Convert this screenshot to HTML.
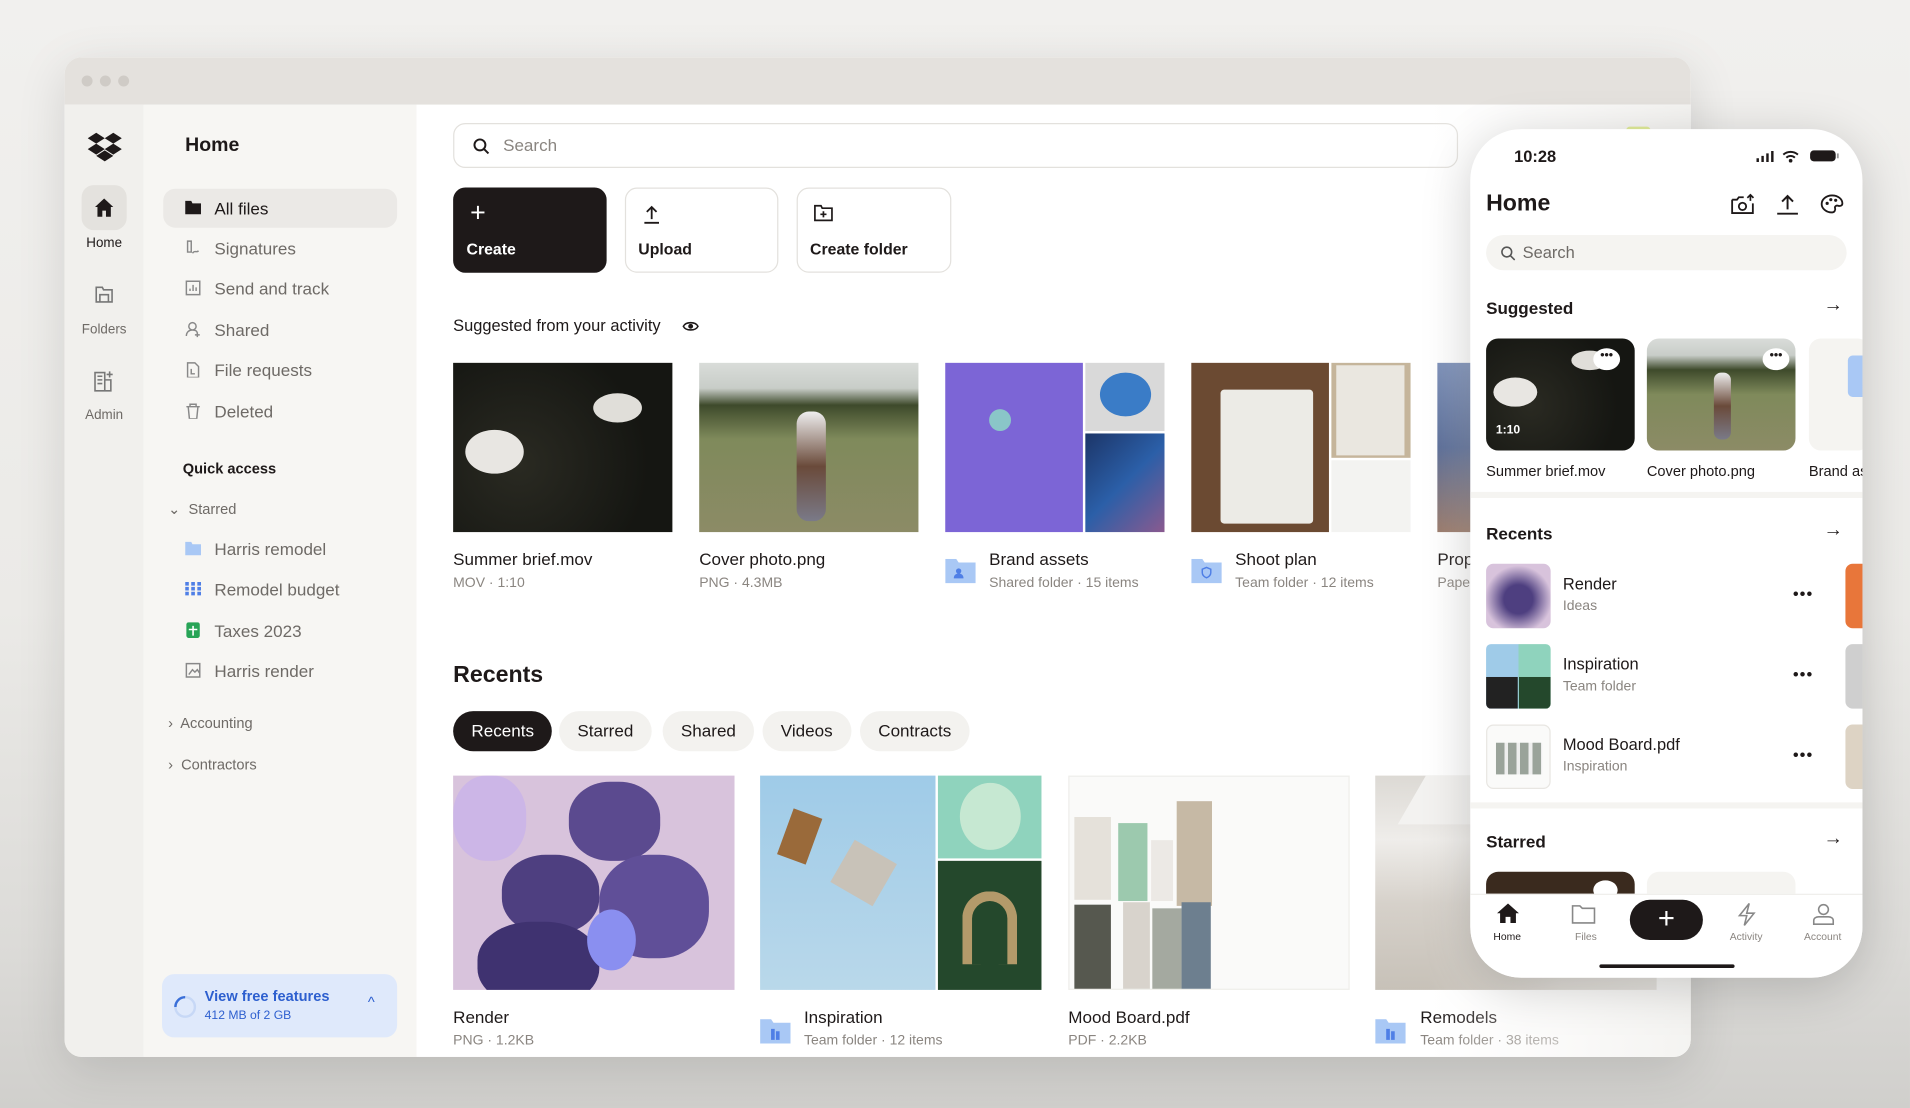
<!DOCTYPE html>
<html><head><meta charset="utf-8">
<style>
*{box-sizing:border-box;margin:0;padding:0}
html,body{width:1910px;height:1108px;overflow:hidden;background:#ecebe8}
body{font-family:"Liberation Sans",sans-serif;color:#1e1919}
#w{width:1568px;height:910px;transform:scale(1.2181,1.2176);transform-origin:0 0;position:relative;background:linear-gradient(180deg,#f1f0ee 0%,#ebeae7 55%,#dcdbd8 85%,#d0cfcc 100%)}
.win{position:absolute;left:53px;top:47px;width:1335px;height:821px;border-radius:14px;overflow:hidden;background:#fff;box-shadow:0 10px 40px rgba(0,0,0,.12)}
.tb{position:absolute;left:0;top:0;width:100%;height:39px;background:#e4e1dd}
.dot{position:absolute;top:15px;width:9px;height:9px;border-radius:50%;background:#cfcbc6}
.rail{position:absolute;left:0;top:39px;width:65px;bottom:0;background:#f1f0ed}
.side{position:absolute;left:65px;top:39px;width:224px;bottom:0;background:#f7f6f3}
.main{position:absolute;left:289px;top:39px;right:0;bottom:0;background:#fff}
.abs{position:absolute}
.ri{position:absolute;left:0;width:65px;text-align:center;font-size:11px;color:#6e6a66}
.si{position:absolute;left:16px;width:192px;height:32px;border-radius:10px;font-size:14px;color:#6e6a66;line-height:32px;padding-left:42px}
.si .ic{position:absolute;left:18px;top:9px;width:13px;height:13px}
.tile{position:absolute;overflow:hidden}
.t1{font-size:14px;color:#1e1919;position:absolute;white-space:nowrap}
.t2{font-size:11.5px;color:#8a8580;position:absolute;white-space:nowrap}
.chip{position:absolute;height:33px;border-radius:17px;background:#f3f2ef;font-size:14px;line-height:33px;padding:0 15px;color:#1e1919}
.ph{position:absolute;left:1207px;top:106px;width:322px;height:697px;background:#fff;border-radius:42px;box-shadow:0 8px 40px rgba(0,0,0,.18);overflow:hidden}
.pt{position:absolute;font-size:14px;font-weight:bold;color:#1e1919}
.dots3{position:absolute;font-size:13px;letter-spacing:1px;font-weight:bold;color:#1e1919}
</style></head><body><div id="w">
<div class="win">
 <div class="tb"><div class="dot" style="left:14px"></div><div class="dot" style="left:29px"></div><div class="dot" style="left:44px"></div></div>
 <div class="rail">
  <svg class="abs" style="left:19px;top:22px" width="28" height="26" viewBox="0 0 28 26"><path fill="#1e1919" d="M7 1l7 4.5-7 4.5-7-4.5zM21 1l7 4.5-7 4.5-7-4.5zM0 14.5L7 10l7 4.5-7 4.5zM28 14.5L21 10l-7 4.5 7 4.5zM7 20l7-4.5 7 4.5-7 4.5z"/></svg>
  <div class="abs" style="left:14px;top:66px;width:37px;height:37px;border-radius:10px;background:#e4e2de"></div>
  <svg class="abs" style="left:24px;top:76px" width="17" height="17" viewBox="0 0 17 17"><path fill="#1e1919" d="M8.5 1L1 8h2v8h4v-5h3v5h4V8h2z"/></svg>
  <div class="ri" style="top:108px;color:#1e1919">Home</div>
  <svg class="abs" style="left:25px;top:149px" width="15" height="14" viewBox="0 0 15 14"><path fill="none" stroke="#777" stroke-width="1.3" d="M1 1h5l1 2h7v10H1z M4 7h7v6H4z"/></svg>
  <div class="ri" style="top:179px">Folders</div>
  <svg class="abs" style="left:24px;top:218px" width="17" height="18" viewBox="0 0 17 18"><path fill="none" stroke="#777" stroke-width="1.3" d="M1 2h8v15H1zM9 8h5v9H9M3 5h4M3 8h4M3 11h4M13 1v5M10.5 3.5h5"/></svg>
  <div class="ri" style="top:249px">Admin</div>
 </div>
 <div class="side">
  <div class="abs" style="left:34px;top:25px;font-size:16px;font-weight:bold">Home</div>
  <div class="si" style="top:69px;background:#ebe9e6;color:#1e1919"><svg class="ic" viewBox="0 0 13 13"><path fill="#1e1919" d="M0 1h5l1 2h7v9H0z"/></svg>All files</div>
  <div class="si" style="top:102px"><svg class="ic" viewBox="0 0 13 13"><path fill="none" stroke="#888" stroke-width="1.2" d="M2 1v9h3V1zM6 11c2-3 3 0 5-2"/></svg>Signatures</div>
  <div class="si" style="top:135px"><svg class="ic" viewBox="0 0 13 13"><path fill="none" stroke="#888" stroke-width="1.2" d="M1 1h11v11H1zM4 9V7M6.5 9V4M9 9V6"/></svg>Send and track</div>
  <div class="si" style="top:169px"><svg class="ic" viewBox="0 0 13 13"><path fill="none" stroke="#888" stroke-width="1.2" d="M6 1a3 3 0 110 6 3 3 0 010-6zM1 12c0-3 2-5 5-5s4 1 4 3M10 9v4M8 11h4"/></svg>Shared</div>
  <div class="si" style="top:202px"><svg class="ic" viewBox="0 0 13 13"><path fill="none" stroke="#888" stroke-width="1.2" d="M2 1h6l3 3v9H2zM5 6v4h3"/></svg>File requests</div>
  <div class="si" style="top:236px"><svg class="ic" viewBox="0 0 13 13"><path fill="none" stroke="#888" stroke-width="1.2" d="M1 3h11M4 3V1h5v2M2.5 3l1 10h6l1-10"/></svg>Deleted</div>
  <div class="abs" style="left:32px;top:292px;font-size:12px;font-weight:bold;color:#1e1919">Quick access</div>
  <div class="abs" style="left:20px;top:325px;font-size:12px;color:#6e6a66">⌄&nbsp; Starred</div>
  <div class="si" style="top:349px"><svg class="ic" viewBox="0 0 13 13"><path fill="#a9c8f5" d="M0 1h5l1 2h7v9H0z"/></svg>Harris remodel</div>
  <div class="si" style="top:382px"><svg class="ic" viewBox="0 0 13 13"><path fill="#4f7fe6" d="M0 1h3v3H0zM5 1h3v3H5zM10 1h3v3h-3zM0 5h3v3H0zM5 5h3v3H5zM10 5h3v3h-3zM0 9h3v3H0zM5 9h3v3H5zM10 9h3v3h-3z"/></svg>Remodel budget</div>
  <div class="si" style="top:416px"><svg class="ic" viewBox="0 0 13 13"><rect x="1" y="0" width="11" height="13" rx="2" fill="#27a456"/><path stroke="#fff" stroke-width="1.3" d="M6.5 3v8M3 6h7"/></svg>Taxes 2023</div>
  <div class="si" style="top:449px"><svg class="ic" viewBox="0 0 13 13"><path fill="none" stroke="#888" stroke-width="1.2" d="M1 1h11v11H1zM3 10l3-4 2 2 2-2 2 3"/></svg>Harris render</div>
  <div class="abs" style="left:20px;top:501px;font-size:12px;color:#6e6a66">›&nbsp; Accounting</div>
  <div class="abs" style="left:20px;top:535px;font-size:12px;color:#6e6a66">›&nbsp; Contractors</div>
  <div class="abs" style="left:15px;top:714px;width:193px;height:52px;border-radius:10px;background:#dfe9fb">
   <svg class="abs" style="left:8px;top:16px" width="22" height="22" viewBox="0 0 22 22"><circle cx="11" cy="11" r="8" fill="none" stroke="#c7d8f6" stroke-width="2"/><path d="M11 3a8 8 0 00-8 8" fill="none" stroke="#3a6fd8" stroke-width="2"/></svg>
   <div class="abs" style="left:35px;top:11px;font-size:12px;font-weight:bold;color:#2d5fcf">View free features</div>
   <div class="abs" style="left:35px;top:29px;font-size:10px;color:#2d5fcf">412 MB of 2 GB</div>
   <div class="abs" style="left:169px;top:16px;font-size:12px;color:#2d5fcf">^</div>
  </div>
 </div>
 <div class="main">
  <div class="abs" style="left:30px;top:15px;width:825px;height:37px;border:1.5px solid #e3e1dd;border-radius:10px"></div>
  <svg class="abs" style="left:46px;top:27px" width="14" height="14" viewBox="0 0 14 14"><circle cx="6" cy="6" r="4.5" fill="none" stroke="#1e1919" stroke-width="1.6"/><path d="M9.5 9.5L13 13" stroke="#1e1919" stroke-width="1.6"/></svg>
  <div class="abs" style="left:71px;top:25px;font-size:14px;color:#8a8580">Search</div>
  <div class="abs" style="left:30px;top:68px;width:126px;height:70px;border-radius:10px;background:#1e1919"></div>
  <div class="abs" style="left:44px;top:76px;font-size:22px;color:#fff;font-weight:300">+</div>
  <div class="abs" style="left:41px;top:111px;font-size:13px;font-weight:bold;color:#fff">Create</div>
  <div class="abs" style="left:171px;top:68px;width:126px;height:70px;border-radius:10px;border:1.5px solid #e3e1dd"></div>
  <svg class="abs" style="left:186px;top:82px" width="14" height="16" viewBox="0 0 14 16"><path d="M7 12V2M3 6l4-4 4 4M1 15h12" fill="none" stroke="#1e1919" stroke-width="1.5"/></svg>
  <div class="abs" style="left:182px;top:111px;font-size:13px;font-weight:bold">Upload</div>
  <div class="abs" style="left:312px;top:68px;width:127px;height:70px;border-radius:10px;border:1.5px solid #e3e1dd"></div>
  <svg class="abs" style="left:326px;top:82px" width="16" height="14" viewBox="0 0 16 14"><path d="M1 1h5l1 2h8v10H1zM8 5.5v5M5.5 8h5" fill="none" stroke="#1e1919" stroke-width="1.4"/></svg>
  <div class="abs" style="left:323px;top:111px;font-size:13px;font-weight:bold">Create folder</div>
  <div class="abs" style="left:30px;top:174px;font-size:13.5px;color:#1e1919">Suggested from your activity</div>
  <svg class="abs" style="left:218px;top:176px" width="14" height="12" viewBox="0 0 14 12"><path d="M1 6c2-4 10-4 12 0-2 4-10 4-12 0z" fill="none" stroke="#1e1919" stroke-width="1.3"/><circle cx="7" cy="6" r="2" fill="#1e1919"/></svg>
  <div class="tile" style="left:30px;top:212px;width:180px;height:139px;background:radial-gradient(circle at 30% 60%,#2a2a22,#151612 70%)">
   <div class="abs" style="left:10px;top:55px;width:48px;height:36px;border-radius:50%;background:#e8e6e2"></div>
   <div class="abs" style="left:115px;top:25px;width:40px;height:24px;border-radius:50%;background:#e0ded9"></div>
  </div>
  <div class="tile" style="left:232px;top:212px;width:180px;height:139px;background:linear-gradient(180deg,#d9dcd9 0%,#c8cdc8 15%,#3e4a2b 25%,#7f8a5b 45%,#8c8b66 100%)">
   <div class="abs" style="left:80px;top:40px;width:24px;height:90px;border-radius:10px;background:linear-gradient(180deg,#eee,#6a4a3a 50%,#7a7a88)"></div>
  </div>
  <div class="tile" style="left:434px;top:212px;width:113px;height:139px;background:#7c65d6"><div class="abs" style="left:36px;top:38px;width:18px;height:18px;border-radius:50%;background:#8ac6c8"></div></div>
  <div class="tile" style="left:549px;top:212px;width:65px;height:56px;background:#d9d9d9"><div class="abs" style="left:12px;top:8px;width:42px;height:36px;border-radius:50%;background:#3a7cc7"></div></div>
  <div class="tile" style="left:549px;top:270px;width:65px;height:81px;background:linear-gradient(135deg,#1c3568,#2b5fa8 50%,#8a5a8f)"></div>
  <div class="tile" style="left:636px;top:212px;width:113px;height:139px;background:#6b4a32"><div class="abs" style="left:24px;top:22px;width:76px;height:110px;background:#ecebe6;border-radius:3px"></div></div>
  <div class="tile" style="left:751px;top:212px;width:65px;height:78px;background:#c5b59b"><div class="abs" style="left:4px;top:2px;width:56px;height:74px;background:#eae7e0"></div></div>
  <div class="tile" style="left:751px;top:292px;width:65px;height:59px;background:#f3f3f1"></div>
  <div class="tile" style="left:838px;top:212px;width:40px;height:139px;background:linear-gradient(180deg,#7b8fb8,#5a6d98 50%,#9a7a6a)"></div>
  <div class="t1" style="left:30px;top:365px">Summer brief.mov</div><div class="t2" style="left:30px;top:387px">MOV · 1:10</div>
  <div class="t1" style="left:232px;top:365px">Cover photo.png</div><div class="t2" style="left:232px;top:387px">PNG · 4.3MB</div>
  <svg class="abs" style="left:434px;top:373px" width="25" height="20" viewBox="0 0 25 20"><path fill="#a9c8f5" d="M0 0h9l2 3h14v17H0z"/><circle cx="11" cy="10" r="2.2" fill="#4f7fe6"/><path fill="#4f7fe6" d="M7 16c0-3 2-4 4-4s4 1 4 4z"/></svg>
  <div class="t1" style="left:470px;top:365px">Brand assets</div><div class="t2" style="left:470px;top:387px">Shared folder · 15 items</div>
  <svg class="abs" style="left:636px;top:373px" width="25" height="20" viewBox="0 0 25 20"><path fill="#a9c8f5" d="M0 0h9l2 3h14v17H0z"/><path d="M12.5 7l3.5 1.5v3c0 2-2 3.5-3.5 4-1.5-.5-3.5-2-3.5-4v-3z" fill="none" stroke="#4f7fe6" stroke-width="1.2"/></svg>
  <div class="t1" style="left:672px;top:365px">Shoot plan</div><div class="t2" style="left:672px;top:387px">Team folder · 12 items</div>
  <div class="t1" style="left:838px;top:365px">Prop</div><div class="t2" style="left:838px;top:387px">Pape</div>
  <div class="abs" style="left:30px;top:458px;font-size:19px;font-weight:bold">Recents</div>
  <div class="chip" style="left:30px;background:#1e1919;color:#fff;top:498px">Recents</div>
  <div class="chip" style="left:117px;top:498px">Starred</div>
  <div class="chip" style="left:202px;top:498px">Shared</div>
  <div class="chip" style="left:284px;top:498px">Videos</div>
  <div class="chip" style="left:364px;top:498px">Contracts</div>
  <div class="tile" style="left:30px;top:551px;width:231px;height:176px;background:#d8c3dc">
   <div class="abs" style="left:95px;top:5px;width:75px;height:65px;border-radius:45%;background:#5b4a8f"></div>
   <div class="abs" style="left:40px;top:65px;width:80px;height:65px;border-radius:45%;background:#4e3f80"></div>
   <div class="abs" style="left:120px;top:65px;width:90px;height:85px;border-radius:45%;background:#604f98"></div>
   <div class="abs" style="left:20px;top:120px;width:100px;height:70px;border-radius:45%;background:#3f3270"></div>
   <div class="abs" style="left:0;top:0;width:60px;height:70px;border-radius:45%;background:#c9b3ea;opacity:.8"></div>
   <div class="abs" style="left:110px;top:110px;width:40px;height:50px;border-radius:50%;background:#8a8ff0"></div>
  </div>
  <div class="tile" style="left:282px;top:551px;width:144px;height:176px;background:linear-gradient(180deg,#9fcbe8,#b9d8ea)">
   <div class="abs" style="left:20px;top:30px;width:25px;height:40px;background:#9a6a3a;transform:rotate(20deg)"></div>
   <div class="abs" style="left:65px;top:60px;width:40px;height:40px;background:#c8c2b8;transform:rotate(30deg)"></div>
  </div>
  <div class="tile" style="left:428px;top:551px;width:85px;height:68px;background:#8fd3bd"><div class="abs" style="left:18px;top:6px;width:50px;height:55px;border-radius:50%;background:#c6e8d2"></div></div>
  <div class="tile" style="left:428px;top:621px;width:85px;height:106px;background:#24482c"><div class="abs" style="left:20px;top:25px;width:45px;height:60px;border-radius:30px 30px 0 0;border:8px solid #b39a6a;border-bottom:none"></div></div>
  <div class="tile" style="left:535px;top:551px;width:231px;height:176px;background:#fafaf9;border:1px solid #efeeeb">
   <div class="abs" style="left:4px;top:33px;width:30px;height:68px;background:#e5e1da"></div>
   <div class="abs" style="left:40px;top:38px;width:24px;height:64px;background:#9cc9ae"></div>
   <div class="abs" style="left:67px;top:52px;width:18px;height:50px;background:#ece9e5"></div>
   <div class="abs" style="left:88px;top:20px;width:29px;height:86px;background:#c6b9a5"></div>
   <div class="abs" style="left:4px;top:105px;width:30px;height:72px;background:#56584f"></div>
   <div class="abs" style="left:44px;top:103px;width:22px;height:72px;background:#d8d3cc"></div>
   <div class="abs" style="left:68px;top:108px;width:24px;height:67px;background:#a4a9a0"></div>
   <div class="abs" style="left:92px;top:103px;width:24px;height:72px;background:#6d7f8f"></div>
  </div>
  <div class="tile" style="left:787px;top:551px;width:231px;height:176px;background:linear-gradient(180deg,#dcd9d4 0%,#efedea 30%,#d6d1ca 60%,#c7c1b8 100%)">
   <div class="abs" style="left:30px;top:0;width:90px;height:40px;background:#f3f2f0;transform:skewX(-30deg)"></div>
  </div>
  <div class="t1" style="left:30px;top:741px">Render</div><div class="t2" style="left:30px;top:763px">PNG · 1.2KB</div>
  <svg class="abs" style="left:282px;top:751px" width="25" height="20" viewBox="0 0 25 20"><path fill="#a9c8f5" d="M0 0h9l2 3h14v17H0z"/><path fill="#4f7fe6" d="M9 8h3v9H9zM13 10h3v7h-3z"/></svg>
  <div class="t1" style="left:318px;top:741px">Inspiration</div><div class="t2" style="left:318px;top:763px">Team folder · 12 items</div>
  <div class="t1" style="left:535px;top:741px">Mood Board.pdf</div><div class="t2" style="left:535px;top:763px">PDF · 2.2KB</div>
  <svg class="abs" style="left:787px;top:751px" width="25" height="20" viewBox="0 0 25 20"><path fill="#a9c8f5" d="M0 0h9l2 3h14v17H0z"/><path fill="#4f7fe6" d="M9 8h3v9H9zM13 10h3v7h-3z"/></svg>
  <div class="t1" style="left:824px;top:741px">Remodels</div><div class="t2" style="left:824px;top:763px">Team folder · 38 items</div>
  <div class="abs" style="left:830px;top:0;width:220px;height:100%;background:linear-gradient(90deg,rgba(250,250,249,0),rgba(246,245,243,.5) 50%,rgba(240,239,236,.75))"></div>
 </div>
</div>
<div class="abs" style="left:1335px;top:104px;width:20px;height:6px;border-radius:5px;background:#e1ec9a"></div>
<div class="ph">
 <div class="abs" style="left:36px;top:15px;font-size:13.5px;font-weight:bold">10:28</div>
 <svg class="abs" style="left:234px;top:16px" width="72" height="12" viewBox="0 0 72 12"><path fill="#1e1919" d="M1 8h2v3H1zM5 6h2v5H5zM9 4h2v7H9zM13 2h2v9h-2z"/><path d="M23 5a9 9 0 0112 0M25.5 7.5a5 5 0 017 0" fill="none" stroke="#1e1919" stroke-width="1.6"/><circle cx="29" cy="10" r="1.5" fill="#1e1919"/><rect x="45" y="1.5" width="21" height="9" rx="3" fill="#1e1919"/><rect x="67" y="4" width="1.5" height="4" fill="#999"/></svg>
 <div class="abs" style="left:13px;top:51px;font-size:19px;font-weight:bold">Home</div>
 <svg class="abs" style="left:214px;top:53px" width="20" height="18" viewBox="0 0 20 18"><path d="M1 5h4l1.5-2h4M1 5v11h17V8" fill="none" stroke="#1e1919" stroke-width="1.5"/><circle cx="9.5" cy="10.5" r="3" fill="none" stroke="#1e1919" stroke-width="1.5"/><path d="M16 1v5M13.5 3.5L16 1l2.5 2.5" fill="none" stroke="#1e1919" stroke-width="1.4"/></svg>
 <svg class="abs" style="left:251px;top:53px" width="19" height="18" viewBox="0 0 19 18"><path d="M9.5 13V2M5 6.5l4.5-4.5 4.5 4.5M1 16.5h17" fill="none" stroke="#1e1919" stroke-width="1.6"/></svg>
 <svg class="abs" style="left:287px;top:53px" width="20" height="17" viewBox="0 0 20 17"><path d="M10 1.5c5 0 8.5 3 8.5 6.5 0 2-2 2.5-3.5 2-1.5-.5-3 .5-2.5 2s-.5 3.5-2.5 3.5C5 15.5 1.5 12 1.5 8.5S5 1.5 10 1.5z" fill="none" stroke="#1e1919" stroke-width="1.5"/><circle cx="6" cy="8" r="1.3" fill="#1e1919"/><circle cx="9" cy="5" r="1.3" fill="#1e1919"/><circle cx="13" cy="5.5" r="1.3" fill="#1e1919"/></svg>
 <div class="abs" style="left:13px;top:87px;width:296px;height:29px;border-radius:15px;background:#f5f4f1"></div>
 <svg class="abs" style="left:25px;top:96px" width="12" height="12" viewBox="0 0 12 12"><circle cx="5" cy="5" r="4" fill="none" stroke="#555" stroke-width="1.3"/><path d="M8 8l3.5 3.5" stroke="#555" stroke-width="1.3"/></svg>
 <div class="abs" style="left:43px;top:94px;font-size:13.5px;color:#6e6a66">Search</div>
 <div class="pt" style="left:13px;top:139px">Suggested</div>
 <div class="abs" style="left:290px;top:136px;font-size:16px">→</div>
 <div class="tile" style="left:13px;top:172px;width:122px;height:92px;border-radius:10px;background:radial-gradient(circle at 30% 60%,#2a2a22,#151612 70%)">
  <div class="abs" style="left:6px;top:32px;width:36px;height:24px;border-radius:50%;background:#e8e6e2"></div>
  <div class="abs" style="left:70px;top:10px;width:30px;height:16px;border-radius:50%;background:#e0ded9"></div>
  <div class="abs" style="left:8px;top:70px;font-size:10px;color:#fff;font-weight:bold">1:10</div>
 </div>
 <div class="tile" style="left:145px;top:172px;width:122px;height:92px;border-radius:10px;background:linear-gradient(180deg,#d9dcd9 0%,#c8cdc8 15%,#3e4a2b 28%,#7f8a5b 50%,#8c8b66 100%)"><div class="abs" style="left:55px;top:28px;width:14px;height:55px;border-radius:6px;background:linear-gradient(180deg,#eee,#6a4a3a 50%,#7a7a88)"></div></div>
 <div class="abs" style="left:101px;top:180px;width:22px;height:18px;border-radius:50%;background:#fff;font-size:10px;text-align:center;line-height:14px;font-weight:bold">•••</div>
 <div class="abs" style="left:240px;top:180px;width:22px;height:18px;border-radius:50%;background:#fff;font-size:10px;text-align:center;line-height:14px;font-weight:bold">•••</div>
 <div class="tile" style="left:278px;top:172px;width:50px;height:92px;border-radius:10px;background:#f5f4f1"><div class="abs" style="left:32px;top:14px;width:20px;height:34px;border-radius:4px;background:#a9c8f5"></div></div>
 <div class="abs" style="left:13px;top:274px;font-size:12px;white-space:nowrap">Summer brief.mov</div>
 <div class="abs" style="left:145px;top:274px;font-size:12px;white-space:nowrap">Cover photo.png</div>
 <div class="abs" style="left:278px;top:274px;font-size:12px;white-space:nowrap">Brand as</div>
 <div class="abs" style="left:0;top:298px;width:322px;height:5px;background:#f5f4f1"></div>
 <div class="pt" style="left:13px;top:324px">Recents</div>
 <div class="abs" style="left:290px;top:321px;font-size:16px">→</div>
 <div class="tile" style="left:13px;top:357px;width:53px;height:53px;border-radius:6px;background:radial-gradient(circle at 50% 55%,#4e3f80 30%,#d8c3dc 70%)"></div>
 <div class="abs" style="left:76px;top:366px;font-size:13.5px">Render</div><div class="abs" style="left:76px;top:386px;font-size:11.5px;color:#8a8580">Ideas</div>
 <div class="dots3" style="left:265px;top:374px">•••</div>
 <div class="tile" style="left:13px;top:423px;width:53px;height:53px;border-radius:4px;background:linear-gradient(90deg,#9fcbe8 50%,#8fd3bd 50%)"><div class="abs" style="left:0;top:27px;width:26px;height:26px;background:#222"></div><div class="abs" style="left:27px;top:27px;width:26px;height:26px;background:#24482c"></div></div>
 <div class="abs" style="left:76px;top:432px;font-size:13.5px">Inspiration</div><div class="abs" style="left:76px;top:452px;font-size:11.5px;color:#8a8580">Team folder</div>
 <div class="dots3" style="left:265px;top:440px">•••</div>
 <div class="tile" style="left:13px;top:489px;width:53px;height:53px;border-radius:6px;background:#fafaf9;border:1.5px solid #e8e6e2"><div class="abs" style="left:7px;top:14px;width:38px;height:26px;background:repeating-linear-gradient(90deg,#9aa39a 0 7px,#eee 7px 10px)"></div></div>
 <div class="abs" style="left:76px;top:498px;font-size:13.5px">Mood Board.pdf</div><div class="abs" style="left:76px;top:518px;font-size:11.5px;color:#8a8580">Inspiration</div>
 <div class="dots3" style="left:265px;top:506px">•••</div>
 <div class="abs" style="left:308px;top:357px;width:20px;height:53px;border-radius:6px;background:#e8763a"></div>
 <div class="abs" style="left:308px;top:423px;width:20px;height:53px;border-radius:6px;background:#cfcfcf"></div>
 <div class="abs" style="left:308px;top:489px;width:20px;height:53px;border-radius:6px;background:#ddd3c4"></div>
 <div class="abs" style="left:0;top:553px;width:322px;height:5px;background:#f5f4f1"></div>
 <div class="pt" style="left:13px;top:577px">Starred</div>
 <div class="abs" style="left:290px;top:574px;font-size:16px">→</div>
 <div class="tile" style="left:13px;top:610px;width:122px;height:20px;border-radius:10px 10px 0 0;background:#3a2a1e"></div>
 <div class="tile" style="left:145px;top:610px;width:122px;height:20px;border-radius:10px 10px 0 0;background:#f5f4f1"></div>
 <div class="abs" style="left:101px;top:617px;width:20px;height:16px;border-radius:50%;background:#fff"></div>
 <div class="abs" style="left:0;top:628px;width:322px;height:69px;background:#fff;border-top:1px solid #efeeeb"></div>
 <svg class="abs" style="left:21px;top:635px" width="20" height="18" viewBox="0 0 20 18"><path fill="#1e1919" d="M10 1L1 9h2.5v8h4.5v-5h4v5h4.5V9H19z"/></svg>
 <div class="abs" style="left:19px;top:658px;font-size:8.5px">Home</div>
 <svg class="abs" style="left:83px;top:637px" width="20" height="16" viewBox="0 0 20 16"><path d="M1 1h6l2 2h10v12H1z" fill="none" stroke="#888" stroke-width="1.3"/></svg>
 <div class="abs" style="left:86px;top:658px;font-size:8.5px;color:#8a8580">Files</div>
 <div class="abs" style="left:131px;top:633px;width:60px;height:33px;border-radius:17px;background:#1e1919;color:#fff;text-align:center;font-size:24px;line-height:31px">+</div>
 <svg class="abs" style="left:218px;top:635px" width="18" height="20" viewBox="0 0 18 20"><path d="M11 1L3 11h6l-2 8 8-10H9z" fill="none" stroke="#888" stroke-width="1.3"/></svg>
 <div class="abs" style="left:213px;top:658px;font-size:8.5px;color:#8a8580">Activity</div>
 <svg class="abs" style="left:281px;top:636px" width="18" height="18" viewBox="0 0 18 18"><circle cx="9" cy="5" r="4" fill="none" stroke="#888" stroke-width="1.3"/><path d="M1 17v-3c0-2 2-3 4-3h8c2 0 4 1 4 3v3z" fill="none" stroke="#888" stroke-width="1.3"/></svg>
 <div class="abs" style="left:274px;top:658px;font-size:8.5px;color:#8a8580">Account</div>
 <div class="abs" style="left:106px;top:686px;width:111px;height:3px;border-radius:2px;background:#1e1919"></div>
</div>
</div></body></html>
